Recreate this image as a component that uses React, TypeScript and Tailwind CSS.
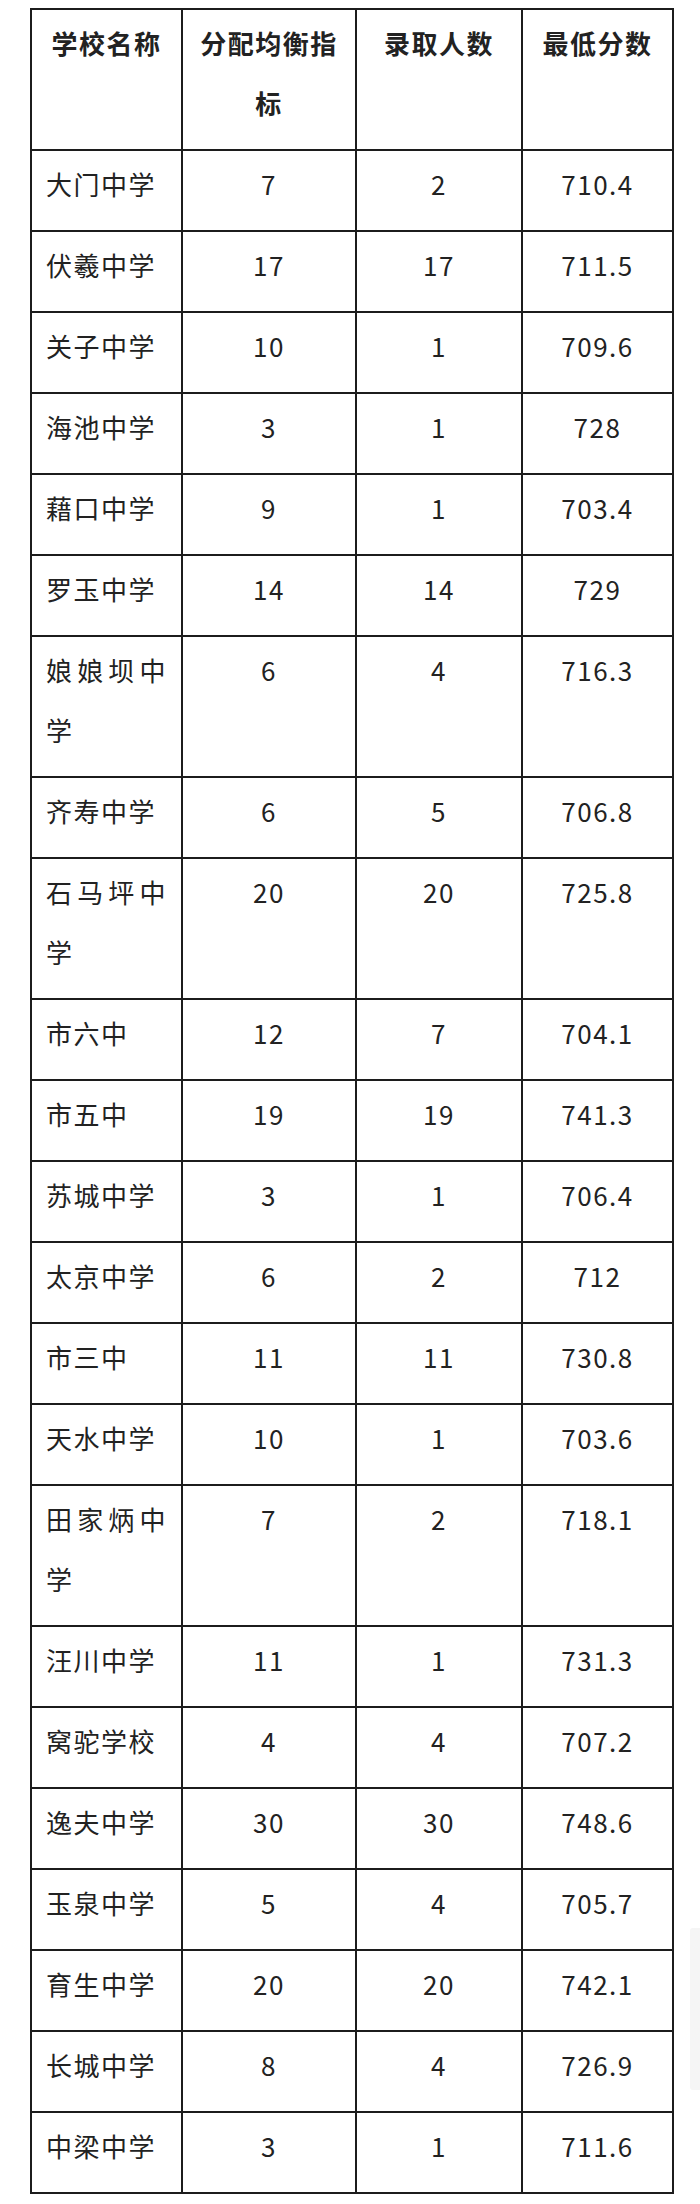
import React from "react";

type Row = { name: string; quota: string; admitted: string; score: string };

const rows: Row[] = [
  { name: "大门中学", quota: "7", admitted: "2", score: "710.4" },
  { name: "伏羲中学", quota: "17", admitted: "17", score: "711.5" },
  { name: "关子中学", quota: "10", admitted: "1", score: "709.6" },
  { name: "海池中学", quota: "3", admitted: "1", score: "728" },
  { name: "藉口中学", quota: "9", admitted: "1", score: "703.4" },
  { name: "罗玉中学", quota: "14", admitted: "14", score: "729" },
  { name: "娘娘坝中学", quota: "6", admitted: "4", score: "716.3" },
  { name: "齐寿中学", quota: "6", admitted: "5", score: "706.8" },
  { name: "石马坪中学", quota: "20", admitted: "20", score: "725.8" },
  { name: "市六中", quota: "12", admitted: "7", score: "704.1" },
  { name: "市五中", quota: "19", admitted: "19", score: "741.3" },
  { name: "苏城中学", quota: "3", admitted: "1", score: "706.4" },
  { name: "太京中学", quota: "6", admitted: "2", score: "712" },
  { name: "市三中", quota: "11", admitted: "11", score: "730.8" },
  { name: "天水中学", quota: "10", admitted: "1", score: "703.6" },
  { name: "田家炳中学", quota: "7", admitted: "2", score: "718.1" },
  { name: "汪川中学", quota: "11", admitted: "1", score: "731.3" },
  { name: "窝驼学校", quota: "4", admitted: "4", score: "707.2" },
  { name: "逸夫中学", quota: "30", admitted: "30", score: "748.6" },
  { name: "玉泉中学", quota: "5", admitted: "4", score: "705.7" },
  { name: "育生中学", quota: "20", admitted: "20", score: "742.1" },
  { name: "长城中学", quota: "8", admitted: "4", score: "726.9" },
  { name: "中梁中学", quota: "3", admitted: "1", score: "711.6" },
];

const cell =
  "border-2 border-[#1c1c1c] px-[14px] pt-[3px] pb-[16px] align-top leading-[60px]";

export default function App() {
  return (
    <div className="relative min-h-[2204px] bg-white pt-[8px] font-['Noto_Sans_CJK_SC','Noto_Sans',sans-serif] text-[26px] tracking-[1.5px] text-[#222]">
      <table className="ml-[30px] w-[642px] table-fixed border-collapse">
        <colgroup>
          <col className="w-[151px]" />
          <col className="w-[174px]" />
          <col className="w-[166px]" />
          <col className="w-[151px]" />
        </colgroup>
        <thead>
          <tr className="font-bold">
            <th className={`${cell} text-center font-bold`}>学校名称</th>
            <th className={`${cell} text-center font-bold`}>分配均衡指标</th>
            <th className={`${cell} text-center font-bold`}>录取人数</th>
            <th className={`${cell} text-center font-bold`}>最低分数</th>
          </tr>
        </thead>
        <tbody>
          {rows.map((r) => (
            <tr key={r.name}>
              <td className={`${cell} text-justify`}>{r.name}</td>
              <td className={`${cell} text-center`}>{r.quota}</td>
              <td className={`${cell} text-center`}>{r.admitted}</td>
              <td className={`${cell} text-center`}>{r.score}</td>
            </tr>
          ))}
        </tbody>
      </table>
      {/* faint scroll indicator at the right edge */}
      <div className="absolute right-0 top-[1928px] h-[162px] w-[10px] rounded-l-[3px] bg-[#f5f5f5]" />
    </div>
  );
}
